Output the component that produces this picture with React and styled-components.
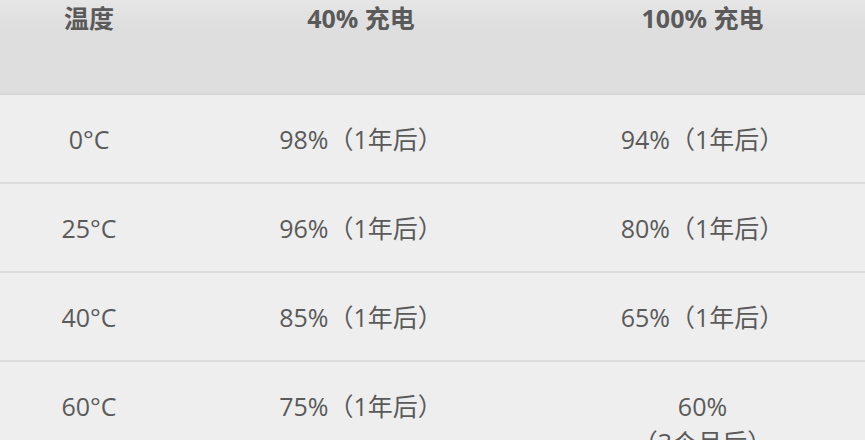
import React from 'react';
import styled, { createGlobalStyle } from "styled-components";

const GlobalStyle = createGlobalStyle`
    html, body {
        margin: 0;
        padding: 0;
        background-color: #eeeeee;
    }
    body {
        font-family: "Open Sans", "Noto Sans CJK SC", sans-serif;
    }
`;

// 表格数据
const rows = [
    { temp: "0°C", half: "98%（1年后）", full: ["94%（1年后）"] },
    { temp: "25°C", half: "96%（1年后）", full: ["80%（1年后）"] },
    { temp: "40°C", half: "85%（1年后）", full: ["65%（1年后）"] },
    { temp: "60°C", half: "75%（1年后）", full: ["60%", "（3个月后）"] },
];

const App = () => {
    return (
        <>
            <GlobalStyle />
            <Table>
                <HeadRow>
                    <HeadCell>温度</HeadCell>
                    <HeadCell>40% 充电</HeadCell>
                    <HeadCell>100% 充电</HeadCell>
                </HeadRow>
                {rows.map((row) => (
                    <Row key={row.temp}>
                        <Cell>{row.temp}</Cell>
                        <Cell>{row.half}</Cell>
                        <Cell>
                            {row.full.map((line, idx) => (
                                <Line key={idx}>{line}</Line>
                            ))}
                        </Cell>
                    </Row>
                ))}
            </Table>
        </>
    );
};

export default App;

const Table = styled.div`
    display: flex;
    flex-direction: column;
    width: 865px;
`;

const HeadRow = styled.div`
    display: grid;
    grid-template-columns: 178px 366px 1fr 4px;
    height: 93px;
    background: linear-gradient(#e6e6e6, #dedede 30%);
    border-bottom: 2px solid #d6d6d6;
`;

const HeadCell = styled.div`
    text-align: center;
    font-size: 25px;
    font-weight: bold;
    line-height: 36px;
    color: #5a5a5a;
`;

const Row = styled.div`
    display: grid;
    grid-template-columns: 178px 366px 1fr 4px;
    background-color: #eeeeee;
    border-bottom: 2px solid #dcdcdc;
`;

const Cell = styled.div`
    padding: 26px 0 25px;
    text-align: center;
    font-size: 25px;
    line-height: 36px;
    color: #5a5a5a;
`;

const Line = styled.div`
    white-space: nowrap;
`;
